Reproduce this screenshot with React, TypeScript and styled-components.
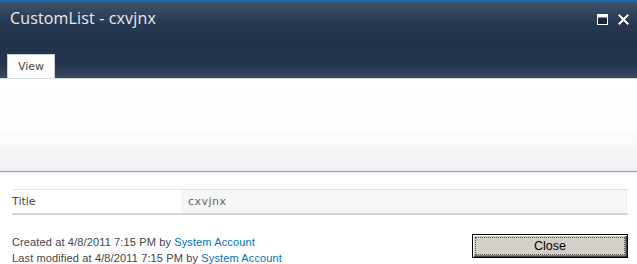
import React from "react";
import styled, { createGlobalStyle } from "styled-components";

const Global = createGlobalStyle`
  html, body { margin: 0; padding: 0; background: #ffffff; }
  body { font-family: Tahoma, "DejaVu Sans", "Liberation Sans", sans-serif; }
`;

const Page = styled.div`
  width: 637px;
  height: 264px;
  overflow: hidden;
  display: flex;
  flex-direction: column;
  background: #ffffff;
`;

const Header = styled.header`
  flex-shrink: 0;
  height: 78px;
  box-sizing: border-box;
  border-top: 2px solid #0f6db3;
  background: linear-gradient(
    to bottom,
    #3d5169 0px,
    #26384f 22px,
    #21334a 40px,
    #22344b 60px,
    #2e4158 70px,
    #3a4c62 76px
  );
  display: flex;
  flex-direction: column;
  justify-content: space-between;
`;

const TitleBar = styled.div`
  display: flex;
  align-items: flex-start;
  justify-content: space-between;
  padding: 5px 8px 0 10px;
`;

const Title = styled.h1`
  margin: 0;
  font-family: "Open Sans", "DejaVu Sans", sans-serif;
  font-weight: 400;
  font-size: 16px;
  line-height: 22px;
  color: #e6ebf1;
  letter-spacing: 0.15px;
`;

const WindowButtons = styled.div`
  display: flex;
  gap: 10px;
  padding-top: 3px;
`;

const IconButton = styled.span`
  display: block;
  width: 11px;
  height: 11px;
`;

const TabRow = styled.div`
  display: flex;
  padding-left: 7px;
`;

const Tab = styled.div`
  width: 48px;
  height: 24px;
  box-sizing: border-box;
  background: #ffffff;
  border: 1px solid #c8ced6;
  border-bottom: none;
  display: flex;
  align-items: center;
  padding-left: 10px;
  font-family: "DejaVu Sans", sans-serif;
  font-size: 11px;
  color: #444444;
`;

const Ribbon = styled.div`
  flex-shrink: 0;
  height: 94px;
  box-sizing: border-box;
  border-top: 1px solid #d8dde3;
  border-bottom: 1px solid #a3aab4;
  background: linear-gradient(
    to bottom,
    #ffffff 0px,
    #fefefe 52px,
    #fdfafe 54px,
    #fcf9fd 66px,
    #f5f5f6 69px,
    #f4f2f5 86px,
    #eceef2 92px
  );
`;

const Content = styled.main`
  flex: 1;
  min-height: 0;
  display: flex;
  flex-direction: column;
  padding: 17px 9px 0 12px;
  background: linear-gradient(to bottom, #e6e9ec 0px, #ffffff 3px);
`;

const FieldTable = styled.div`
  flex-shrink: 0;
  border-top: 1px solid #e3e3e3;
  border-bottom: 2px solid #d6d6d6;
  display: grid;
  grid-template-columns: 169px 1fr;
  height: 26px;
  box-sizing: border-box;
`;

const Cell = styled.div<{ $value?: boolean }>`
  display: flex;
  align-items: center;
  padding-left: ${(p) => (p.$value ? "7px" : "0")};
  background: ${(p) => (p.$value ? "#f6f6f6" : "#ffffff")};
  font-family: "DejaVu Sans", sans-serif;
  font-size: 11px;
  letter-spacing: ${(p) => (p.$value ? "0.5px" : "0")};
  color: ${(p) => (p.$value ? "#666666" : "#4c4c4c")};
`;

const Footer = styled.div`
  flex-shrink: 0;
  display: flex;
  justify-content: space-between;
  align-items: flex-start;
  margin-top: 18px;
`;

const Meta = styled.div`
  font-family: "Liberation Sans", Arial, sans-serif;
  font-size: 11px;
  line-height: 16px;
  letter-spacing: 0.13px;
  color: #444444;
  padding-top: 1px;
`;

const Link = styled.a`
  color: #0072bc;
  text-decoration: none;
`;

const CloseButton = styled.button`
  width: 156px;
  height: 24px;
  box-sizing: border-box;
  margin-top: 1px;
  border: 1px solid #000000;
  background: #d4d0c8;
  box-shadow: inset 1px 1px 0 #ffffff, inset -1px -1px 0 #404040,
    inset -2px -2px 0 #808080;
  padding: 2px;
  font-family: "Liberation Sans", Arial, sans-serif;
  font-size: 12.5px;
  color: #000000;
  cursor: pointer;
`;

const Focus = styled.span`
  display: flex;
  align-items: center;
  justify-content: center;
  height: 100%;
  box-sizing: border-box;
  border: 1px dotted #555555;
`;

export default function App() {
  return (
    <Page>
      <Global />
      <Header>
        <TitleBar>
          <Title>CustomList - cxvjnx</Title>
          <WindowButtons>
            <IconButton>
              <svg width="11" height="11" viewBox="0 0 11 11">
                <rect x="0.5" y="0.5" width="10" height="10" fill="#1a2638" stroke="#ffffff" />
                <rect x="1" y="1" width="9" height="2.5" fill="#ffffff" />
              </svg>
            </IconButton>
            <IconButton>
              <svg width="11" height="11" viewBox="0 0 11 11">
                <path d="M1.5 1.5 L9.5 9.5 M9.5 1.5 L1.5 9.5" stroke="#1a2638" strokeWidth="4" strokeLinecap="square" />
                <path d="M1.5 1.5 L9.5 9.5 M9.5 1.5 L1.5 9.5" stroke="#ffffff" strokeWidth="2.2" strokeLinecap="square" />
              </svg>
            </IconButton>
          </WindowButtons>
        </TitleBar>
        <TabRow>
          <Tab>View</Tab>
        </TabRow>
      </Header>
      <Ribbon />
      <Content>
        <FieldTable>
          <Cell>Title</Cell>
          <Cell $value>cxvjnx</Cell>
        </FieldTable>
        <Footer>
          <Meta>
            <div>
              Created at 4/8/2011 7:15 PM by <Link href="#">System Account</Link>
            </div>
            <div>
              Last modified at 4/8/2011 7:15 PM by <Link href="#">System Account</Link>
            </div>
          </Meta>
          <CloseButton>
            <Focus>Close</Focus>
          </CloseButton>
        </Footer>
      </Content>
    </Page>
  );
}
